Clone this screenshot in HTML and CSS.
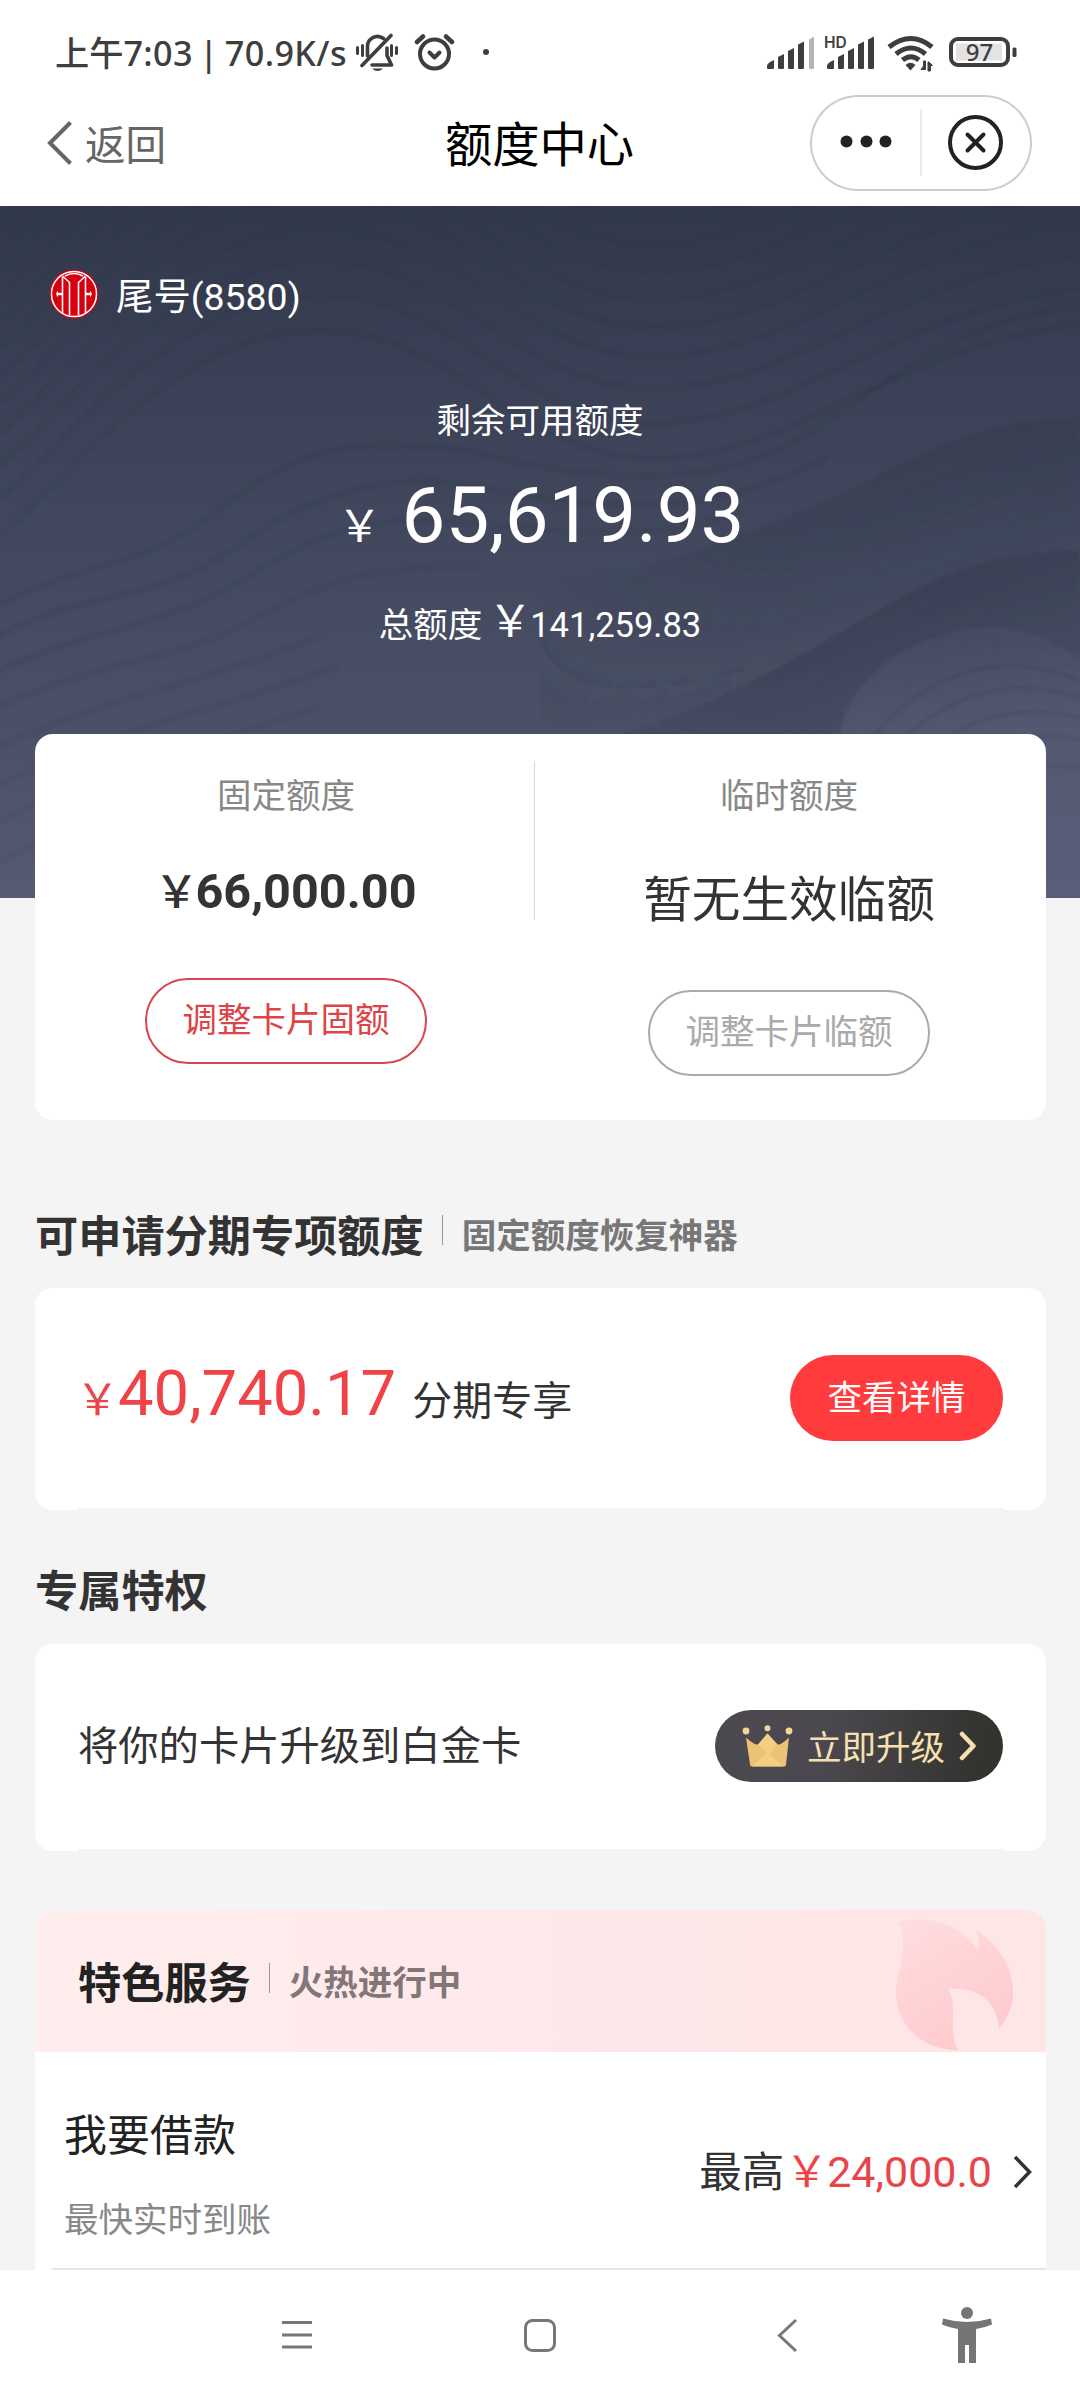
FILE: index.html
```html
<!DOCTYPE html>
<html lang="zh-CN">
<head>
<meta charset="utf-8">
<title>额度中心</title>
<link rel="stylesheet" href="styles.css">
</head>
<body>
<header class="top">
  <div class="status">
    <span class="clock"><span class="cjk">上午</span>7:03 | 70.9K/s</span>
    <svg class="ic-mute" width="46" height="40" viewBox="0 0 46 40" fill="none" stroke="#3e3e3e" stroke-width="3.6" stroke-linecap="round" stroke-linejoin="round">
      <path d="M2.500 14.500v6M7.500 12.500v10M36.500 12.500v10M41.500 14.500v6" stroke-width="3"/>
      <path d="M12.500 23V14a10 10 0 0 1 16-8.500M32 15v7.500l4.500 9.500H17M36 2.500L7 32.500" />
      <path d="M17 35.500h11q-5.500 5-11 0z" fill="#3e3e3e" stroke="none"/>
    </svg>
    <svg class="ic-alarm" width="42" height="40" viewBox="0 0 42 40" fill="none" stroke="#3e3e3e" stroke-width="4" stroke-linecap="round" stroke-linejoin="round">
      <circle cx="20.500" cy="21" r="14.500"/>
      <path d="M15.500 19.500l5 5 5-5"/>
      <path d="M3 9L9 3.500M38 9l-6-5.500" stroke-width="4.500"/>
    </svg>
    <span class="dot"></span>
    <svg class="ic-net" width="252" height="40" viewBox="0 0 252 40" fill="#3e3e3e">
      <path d="M0 35v-2q0-3 7-6v8q0 1-1 1H1q-1 0-1-1zM11 24l6-3v14q0 1-1 1h-4q-1 0-1-1zM21 18l6-3v20q0 1-1 1h-4q-1 0-1-1zM31 11.500l6-3V35q0 1-1 1h-4q-1 0-1-1z"/>
      <path fill="#b5b5b5" d="M42 6.500l5-3V35q0 1-1 1h-3q-1 0-1-1z"/>
      <path d="M60 35v-2q0-3 7-6v8q0 1-1 1h-5q-1 0-1-1zM71 24l6-3v14q0 1-1 1h-4q-1 0-1-1zM81 18l6-3v20q0 1-1 1h-4q-1 0-1-1zM91 11.500l6-3V35q0 1-1 1h-4q-1 0-1-1zM101 6.500l6-3V35q0 1-1 1h-4q-1 0-1-1z"/>
      <text x="57" y="15" class="hd">HD</text>
      <g fill="none" stroke="#3e3e3e" stroke-width="5">
        <path d="M122 14Q144-3 165 14M129 21Q144 9 158.500 21M135.500 27Q144 20.500 152 27"/>
      </g>
      <path d="M138.500 32q5-4.500 10 0l-5 5.500z"/>
      <path d="M154 36.500l4.500 0V28h-2v5zM161 38v-9h1l3.500 3.500h-2V38z" stroke="#3e3e3e"/>
      <rect x="184" y="6" width="57" height="26" rx="7" fill="none" stroke="#3e3e3e" stroke-width="4"/>
      <rect x="189" y="10.500" width="46" height="17" fill="#e3e3e3"/>
      <rect x="245.500" y="14.500" width="4" height="9.500" rx="1.500"/>
      <text x="212.500" y="28" class="bat">97</text>
    </svg>
  </div>
  <div class="navbar">
    <a class="back">
      <svg width="26" height="44" viewBox="0 0 26 44" fill="none" stroke="#666" stroke-width="4"><path d="M23.500 1.500L3 22l20.500 20.500"/></svg>
      <span>返回</span>
    </a>
    <h1 class="page-title">额度中心</h1>
    <div class="capsule">
      <svg width="222" height="96" viewBox="0 0 222 96">
        <g fill="#222"><circle cx="36.500" cy="46.500" r="6"/><circle cx="56.500" cy="46.500" r="6"/><circle cx="75.500" cy="46.500" r="6"/></g>
        <path d="M111 14v67" stroke="#e3e3e3" stroke-width="1.500"/>
        <circle cx="165.500" cy="47.500" r="25.500" fill="none" stroke="#222" stroke-width="4"/>
        <path d="M157.500 39.500l16 16m0-16l-16 16" stroke="#222" stroke-width="4" stroke-linecap="round"/>
      </svg>
    </div>
  </div>
</header>

<section class="hero">
  <svg class="waves" width="1080" height="692" viewBox="0 0 1080 692" fill="none">
    <defs>
      <linearGradient id="fold-a" gradientUnits="userSpaceOnUse" x1="830" y1="240" x2="900" y2="440">
        <stop offset="0" stop-color="#31374c" stop-opacity=".5"/>
        <stop offset="1" stop-color="#31374c" stop-opacity="0"/>
      </linearGradient>
      <linearGradient id="fold-b" gradientUnits="userSpaceOnUse" x1="830" y1="390" x2="910" y2="570">
        <stop offset="0" stop-color="#31374c" stop-opacity=".55"/>
        <stop offset="1" stop-color="#31374c" stop-opacity="0"/>
      </linearGradient>
      <linearGradient id="bulge" x1="0" y1="0" x2="0" y2="1">
        <stop offset="0" stop-color="#5c627d" stop-opacity=".15"/>
        <stop offset=".4" stop-color="#5c627d" stop-opacity=".45"/>
      </linearGradient>
      <linearGradient id="fade" x1="0" y1="0" x2="1" y2="0">
        <stop offset="0" stop-color="#fff" stop-opacity="0"/>
        <stop offset=".5" stop-color="#fff"/>
      </linearGradient>
      <mask id="edge"><path fill="url(#fade)" d="M480 0H1080V692H480z"/></mask>
      <filter id="soft" x="-5%" y="-5%" width="110%" height="110%"><feGaussianBlur stdDeviation="1.600"/></filter>
      <path id="w" d="M-60 210C30 160 90 70 150 30C220-20 300-60 400-20C500 20 560 110 690 90C830 70 900-30 1140-50"/>
      <path id="v" d="M830 0C860-80 930-130 1000-130C1050-130 1080-110 1110-90"/>
    </defs>
    <g filter="url(#soft)">
      <g class="lines">
        <use href="#w" y="-150"/><use href="#w" y="-127"/><use href="#w" y="-104"/><use href="#w" y="-80"/><use href="#w" y="-54"/>
        <use href="#w" y="-28"/><use href="#w" y="0"/><use href="#w" y="28"/><use href="#w" y="58"/><use href="#w" y="90"/>
        <use href="#w" y="124"/><use href="#w" y="160"/>
        <path d="M-20 410C80 350 130 370 210 310C300 240 350 230 470 245C590 275 720 290 820 220S1000 100 1100 100"/>
        <path d="M-20 440C80 380 150 400 230 345C320 280 400 262 500 285C600 305 720 310 830 250"/>
        <path d="M-20 475C80 420 150 430 250 370C340 310 400 310 500 320C600 330 680 330 740 305"/>
      </g>
      <g class="lines faint">
        <path d="M-20 510C100 450 170 460 260 410C340 365 400 360 480 360"/>
        <path d="M-20 550C100 490 200 480 320 430M-20 590C80 530 200 510 340 460M-20 630C60 570 180 550 320 500M-20 670C60 610 200 580 330 530"/>
      </g>
      <g mask="url(#edge)">
        <path fill="url(#fold-a)" d="M540 368C620 375 700 345 790 310C900 265 960 210 1090 212V700H540z"/>
        <path fill="url(#fold-b)" d="M480 560C600 540 690 510 790 455C900 395 960 340 1090 345V700H480z"/>
      </g>
      <path fill="url(#bulge)" d="M838 540C845 465 920 425 985 422C1030 420 1060 440 1090 460V700H838z"/>
      <g class="lines faint">
        <use href="#v" x="10" y="590"/><use href="#v" x="22" y="612"/><use href="#v" x="34" y="636"/><use href="#v" x="46" y="660"/><use href="#v" x="60" y="690"/>
      </g>
    </g>
  </svg>
  <div class="account">
    <svg width="50" height="50" viewBox="0 0 50 50">
      <circle cx="25" cy="25" r="24.500" fill="#d7000f"/>
      <circle cx="25" cy="25" r="22.500" fill="none" stroke="#fff" stroke-width="1.500"/>
      <path fill="none" stroke="#fff" stroke-width="1.600" d="M13.500 7L20.500 13.500V46M36.500 7L29.500 13.500V46M13.500 8V44M36.500 8V44M16 7Q25 2 34 7"/>
      <path fill="#fff" d="M7 25l2-3.500v2.300h4v2.400H9v2.300zM43 25l-2-3.500v2.300h-4v2.400h4v2.300z"/>
    </svg>
    <span>尾号(8580)</span>
  </div>
  <p class="avail-label">剩余可用额度</p>
  <p class="avail"><span class="yen">￥</span><span class="num">65,619.93</span></p>
  <p class="total"><span>总额度</span><span class="yen">￥</span><span class="num">141,259.83</span></p>
</section>

<main class="content">
  <section class="card limits">
    <div class="limit fixed">
      <h3>固定额度</h3>
      <p class="value"><span class="yen">￥</span><b>66,000.00</b></p>
      <a class="pill red">调整卡片固额</a>
    </div>
    <i class="divider"></i>
    <div class="limit temp">
      <h3>临时额度</h3>
      <p class="value">暂无生效临额</p>
      <a class="pill gray">调整卡片临额</a>
    </div>
  </section>

  <div class="heading first"><h2>可申请分期专项额度</h2><i></i><span>固定额度恢复神器</span></div>
  <section class="card row notch installment">
    <p class="amount"><span class="yen">￥</span><span class="num">40,740.17</span><span class="tag">分期专享</span></p>
    <a class="detail">查看详情</a>
  </section>

  <div class="heading second"><h2>专属特权</h2></div>
  <section class="card row notch privilege">
    <p>将你的卡片升级到白金卡</p>
    <a class="upgrade">
      <svg width="52" height="42" viewBox="0 0 52 42">
        <path fill="#ecc374" d="M4 12.500q9 8 12 7l9.500-11 10 11q3 1 11.500-7l-3 27q0 2-2 2H10q-2 0-2-2z"/>
        <path fill="#f6d48c" d="M25.500 8.500l10 11-8.500 10 15 12H10l15-14-9-8z" opacity=".7"/>
        <g fill="#f3d79a"><circle cx="4" cy="6" r="3.400"/><circle cx="25.500" cy="3.200" r="3"/><circle cx="47" cy="6" r="3.400"/></g>
      </svg>
      <span>立即升级</span>
      <svg width="18" height="30" viewBox="0 0 18 30" fill="none" stroke="#f7e0b0" stroke-width="4.500" stroke-linecap="round" stroke-linejoin="round"><path d="M3 3l11.500 12L3 27"/></svg>
    </a>
  </section>

  <section class="services">
    <div class="services-head heading">
      <h2>特色服务</h2><i></i><span>火热进行中</span>
      <svg class="flame" width="120" height="134" viewBox="0 0 120 134">
        <defs><linearGradient id="fl" x1="0.200" y1="0" x2="0.700" y2="1"><stop offset="0" stop-color="#ffdcde"/><stop offset="1" stop-color="#fec9cc"/></linearGradient></defs>
        <path fill="url(#fl)" d="M2 4C34-3 66 6 82 33Q84 22 80 12C112 32 132 76 103 111C102 85 83 68 52 71C64 92 50 111 62 132C15 132-2 94 0 72C1 52 14 26 2 4z"/>
      </svg>
    </div>
    <div class="service">
      <div class="service-name"><h4>我要借款</h4><p>最快实时到账</p></div>
      <p class="service-amount"><span>最高</span><span class="yen">￥</span><span class="num">24,000.0</span></p>
      <svg width="20" height="34" viewBox="0 0 20 34" fill="none" stroke="#333" stroke-width="3.500"><path d="M2 2l14.500 15L2 32"/></svg>
    </div>
  </section>
</main>

<nav class="sysnav">
  <svg width="1080" height="130" viewBox="0 0 1080 130" fill="none" stroke="#777" stroke-width="3">
    <path d="M282 52.500h30M282 65h30M282 77h30"/>
    <rect x="525.500" y="50.500" width="29" height="30" rx="7"/>
    <path d="M796 50L779.500 65.500L796 81"/>
    <g fill="#757575" stroke="none">
      <circle cx="967" cy="43" r="6"/>
      <path d="M943 48.500q24 7 48 0l1 6q-8 3.500-16 4.500V93h-7V75h-4v18h-7V59q-8-1-16-4.500z"/>
    </g>
  </svg>
</nav>
</body>
</html>
```

FILE: styles.css
```css
* { box-sizing: border-box; margin: 0; padding: 0; }
body {
  width: 1080px;
  height: 2400px;
  overflow: hidden;
  background: #f4f4f4;
  color: #333;
  font-family: "Noto Sans CJK SC", sans-serif;
  font-size: 34.500px;
  line-height: 50px;
}
h1, h2, h3, h4 { font-weight: 400; }
svg { display: block; flex: none; }
.num { font-family: Roboto, sans-serif; }
.yen { font-weight: 400; line-height: 1; }

.top { height: 206px; background: #fff; }
.status {
  display: flex;
  align-items: flex-start;
  height: 95px;
  padding: 33px 0 0 55px;
  color: #3e3e3e;
}
.clock {
  width: 300px;
  margin-top: -2px;
  font: 500 34.200px/40px "Noto Sans", sans-serif;
  letter-spacing: .4px;
  word-spacing: -3px;
  white-space: nowrap;
}
.cjk { font-family: "Noto Sans CJK SC", sans-serif; letter-spacing: 0; }
.ic-alarm { margin-left: 13px; }
.dot { width: 6px; height: 6px; margin: 16px 0 0 27px; border-radius: 50%; background: #3e3e3e; }
.ic-net { margin-left: 278px; }
.hd { font: 600 15.500px Inter, sans-serif; }
.bat { font: 500 24px "Noto Sans", sans-serif; text-anchor: middle; }

.navbar { display: grid; grid-template-columns: 1fr 190px 1fr; height: 96px; padding: 0 48px 0 47px; }
.back { display: flex; align-items: center; gap: 12px; color: #666; font-size: 40.600px; }
.page-title { color: #000; font-size: 47.300px; line-height: 94px; text-align: center; white-space: nowrap; }
.capsule { justify-self: end; width: 222px; height: 96px; border-radius: 48px; box-shadow: inset 0 0 0 2px #ccc; }

.hero {
  position: relative;
  height: 692px;
  padding-top: 62px;
  background: linear-gradient(#31384c 0%, #3c4257 30%, #42495e 50%, #4b5066 75%, #565b74 100%);
  color: #fff;
  text-align: center;
}
.waves { position: absolute; top: 0; left: 0; }
.lines { stroke: #292f43; stroke-opacity: .22; stroke-width: 4; }
.faint { stroke-opacity: .14; }
.account, .avail-label, .avail, .total { position: relative; }
.account { display: flex; align-items: center; gap: 17px; height: 52px; padding-left: 49px; font-family: Roboto, "Noto Sans CJK SC", sans-serif; font-size: 37.400px; }
.account span { margin-top: 5px; }
.avail-label { margin-top: 73px; }
.avail { display: flex; justify-content: center; align-items: baseline; margin-top: 23px; padding-left: 2px; line-height: 100px; }
.avail .yen { margin-right: 20px; font-size: 44px; }
.avail .num { font-size: 78px; }
.total { display: flex; justify-content: center; align-items: baseline; margin-top: 30px; }
.total .yen { margin: 0 -2px 0 6px; font-size: 44px; }

.content { position: relative; height: 1536px; padding: 0 34px 0 35px; margin-top: -164px; }
.card { border-radius: 18px; background: #fff; }
.limits { display: grid; grid-template-columns: 499px 1px 511px; height: 386px; }
.divider { height: 159px; margin-top: 27px; background: #d8d8d8; }
.limit { display: flex; flex-direction: column; align-items: center; padding-top: 34px; }
.fixed { padding-left: 3px; }
.temp { padding-right: 3px; }
.limit h3 { color: #888; font-size: 34.500px; }
.value { display: flex; align-items: baseline; height: 60px; line-height: 60px; font-size: 48.600px; }
.fixed .value { margin: 44px 0 -1px; padding-left: 8px; }
.temp .value { margin-top: 48px; }
.value b { font: 700 48.600px/60px Roboto, sans-serif; }
.value .yen { margin: 0 -3px 0 -9px; font-size: 44px; font-weight: 500; }
.pill { width: 282px; height: 86px; margin-top: 57px; border: 2px solid #d9474c; border-radius: 43px; color: #dc4448; line-height: 75px; text-align: center; }
.pill.gray { margin-top: 64px; border-color: #aaa; color: #aaa; }

.heading { display: flex; align-items: center; height: 60px; }
.heading h2 { font-size: 43.200px; font-weight: 700; line-height: 60px; }
.heading i { width: 1px; height: 30px; margin: -6px 19px 0 18px; background: #999; }
.heading span { color: #777; font-weight: 700; }
.first { margin: 83px 0 25px; }
.second { margin: 48px 0 26px; }

.row { position: relative; display: flex; justify-content: space-between; align-items: center; padding: 0 43px; }
.notch::after { content: ""; position: absolute; left: 43px; right: 42px; bottom: 0; height: 2px; background: #f4f4f4; }
.installment { height: 222px; }
.amount { display: flex; align-items: baseline; padding-bottom: 7px; line-height: 80px; }
.amount .yen { margin: 0 -1px 0 -2px; color: #e8454a; font-size: 43px; }
.amount .num { color: #f04348; font-size: 63.300px; }
.amount .tag { margin-left: 16px; font-size: 40px; }
.detail { width: 213px; height: 86px; margin-top: -2px; border-radius: 43px; background: #ff3b3e; color: #fff; line-height: 80px; text-align: center; }
.privilege { height: 207px; }
.privilege p { font-size: 40.300px; line-height: 60px; padding-bottom: 10px; }
.upgrade { display: flex; align-items: center; width: 288px; height: 72px; margin-top: -3px; padding: 0 24px 0 27px; border-radius: 36px; background: linear-gradient(100deg, #4c4a50 0%, #4a484e 40%, #343330 90%); color: #f7e0b0; white-space: nowrap; }
.upgrade span { margin: -3px 14px 0 13px; }

.services { height: 361px; margin-top: 59px; background: #fff; border-radius: 18px 18px 0 0; }
.services-head { position: relative; height: 142px; padding: 0 0 0 43px; border-radius: 18px 18px 0 0; background: linear-gradient(90deg, #ffeeee, #fee7e8 60%, #fee5e6); }
.services-head h2, .services-head span { margin-top: -3px; }
.services-head h2 { color: #222; }
.services-head span { color: #827677; }
.flame { position: absolute; left: 861px; top: 8px; }
.service { display: flex; align-items: center; height: 218px; margin-left: 17px; padding: 24px 13px 0 0; border-bottom: 2px solid #e6e6e6; }
.service-name { flex: 1; padding-left: 12px; }
.service-name h4 { color: #222; font-size: 43px; line-height: 60px; }
.service-name p { color: #888; margin-top: 30px; }
.service-amount { display: flex; align-items: baseline; margin: -3px 21px 0 0; }
.service-amount span:first-child { font-size: 42.500px; }
.service-amount .yen { margin: 0 -1px 0 1px; color: #f04348; font-size: 43px; }
.service-amount .num { color: #e8454a; font-size: 43px; }

.sysnav { position: relative; height: 130px; background: #fff; }
```
